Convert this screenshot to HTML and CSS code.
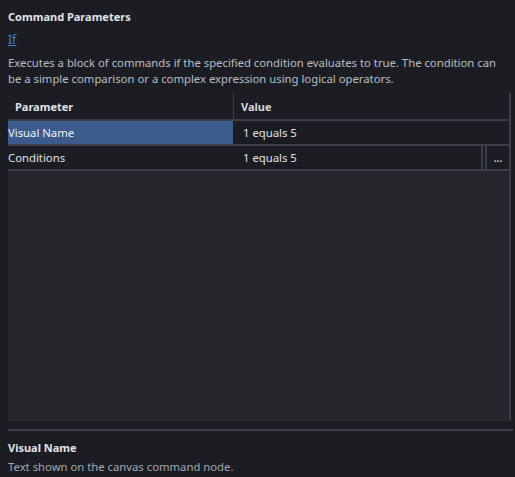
FILE: index.html
```html
<!DOCTYPE html>
<html>
<head>
<meta charset="utf-8">
<link rel="stylesheet" href="styles.css">
</head>
<body>
<div class="panel">
  <div class="title">Command Parameters</div>
  <div class="link-row"><span class="cmd-link">If</span></div>
  <div class="desc">Executes a block of commands if the specified condition evaluates to true. The condition can be a simple comparison or a complex expression using logical operators.</div>
  <div class="grid">
    <div class="row head">
      <div class="cell name">Parameter</div>
      <div class="cell value">Value</div>
    </div>
    <div class="row">
      <div class="cell name selected">Visual Name</div>
      <div class="cell editor"><div class="input">1 equals 5</div></div>
    </div>
    <div class="row">
      <div class="cell name">Conditions</div>
      <div class="cell editor"><div class="input with-btn">1 equals 5</div><div class="btn">...</div></div>
    </div>
    <div class="body"></div>
  </div>
  <div class="help">
    <div class="help-title">Visual Name</div>
    <div class="help-text">Text shown on the canvas command node.</div>
  </div>
</div>
</body>
</html>
```

FILE: styles.css
```css
html, body {
  margin: 0;
  padding: 0;
  background: #1b1d22;
}
body {
  width: 515px;
  height: 477px;
  overflow: hidden;
  font-family: "Noto Sans", "Open Sans", sans-serif;
  font-size: 11.3px;
  color: #d4d6da;
}
.panel {
  padding: 9px 4px 0 8px;
  display: flex;
  flex-direction: column;
}
.title {
  font-weight: bold;
  font-size: 11px;
  line-height: 16px;
  color: #e2e4e8;
  margin-bottom: 7px;
}
.link-row {
  line-height: 16px;
  margin-bottom: 7px;
}
.cmd-link {
  color: #3d7fe0;
  text-decoration: underline;
  font-size: 12px;
}
.desc {
  line-height: 16px;
  color: #b9bdc4;
  margin-bottom: 6px;
}
.grid {
  height: 328px;
  display: flex;
  flex-direction: column;
  border-right: 2px solid #3b3e44;
}
.row {
  display: flex;
  height: 23px;
  border-bottom: 2px solid #3b3e44;
}
.row.head {
  height: 26px;
}
.cell {
  display: flex;
  align-items: center;
}
.cell.name {
  width: 225px;
  flex: none;
  color: #e0e2e6;
}
.head .cell.name {
  padding-left: 7px;
  width: 218px;
  border-right: 1px solid #3b3e44;
  font-weight: bold;
  font-size: 11px;
}
.head .cell.value {
  padding-left: 7px;
  font-weight: bold;
  font-size: 11px;
  flex: 1;
}
.cell.selected {
  background: #3a5b8c;
  color: #f0f2f5;
}
.cell.editor {
  flex: 1;
  margin-left: 2px;
  display: flex;
  align-items: stretch;
}
.input {
  flex: 1;
  background: #1a1c21;
  padding-left: 8px;
  display: flex;
  align-items: center;
  color: #e0e2e6;
}
.input.with-btn {
  border-right: 2px solid #3b3e44;
}
.btn {
  width: 22px;
  margin-left: 2px;
  border-left: 2px solid #3b3e44;
  background: #1a1c21;
  display: flex;
  align-items: center;
  justify-content: center;
  font-size: 10px;
  font-weight: bold;
  color: #c8cacf;
}
.body {
  flex: 1;
  background: #25272c;
}
.help {
  margin-top: 8px;
  border-top: 2px solid #3b3e44;
  padding-top: 8px;
  margin-right: -2px;
}
.help-title {
  font-weight: bold;
  font-size: 11px;
  line-height: 17px;
  color: #e2e4e8;
  margin-bottom: 3px;
}
.help-text {
  line-height: 16px;
  color: #a3a7ae;
}
```
